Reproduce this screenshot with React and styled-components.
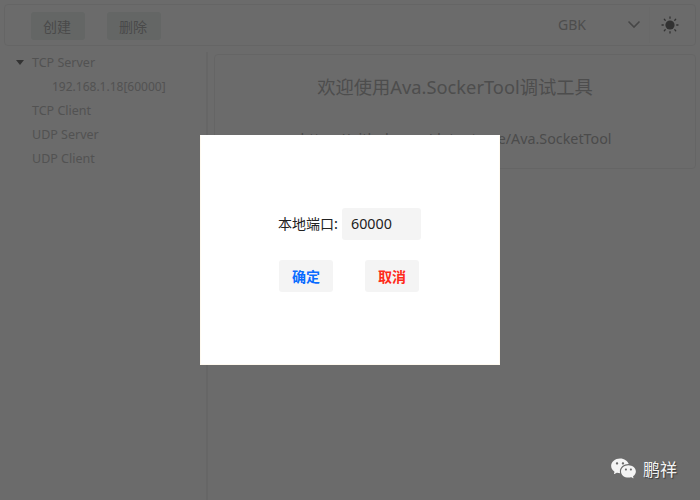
import React from "react";
import styled, { createGlobalStyle } from "styled-components";
import { RiWechatFill } from "react-icons/ri";

const Global = createGlobalStyle`
  html, body { margin: 0; padding: 0; background: #fff; }
  body { font-family: "Noto Sans", "Noto Sans CJK SC", sans-serif; }
  * { box-sizing: border-box; }
`;

const Page = styled.div`
  position: relative;
  width: 700px;
  height: 500px;
  overflow: hidden;
  display: flex;
  flex-direction: column;
  padding: 4px 4px 0 4px;
  background: #ffffff;
  color: #555;
`;

const Toolbar = styled.header`
  height: 42px;
  flex: none;
  display: flex;
  align-items: center;
  border: 1px solid #f0f0f0;
  border-radius: 4px;
  padding: 0 16px 0 26px;
`;

const ToolButton = styled.button`
  width: 54px;
  height: 28px;
  margin-right: 22px;
  margin-top: 2px;
  border: 0;
  border-radius: 3px;
  background: #eef3f0;
  color: #b0b0b0;
  font: 14px "Noto Sans CJK SC", sans-serif;
  padding: 0 2px 0 0;
`;

const Spacer = styled.div`
  flex: 1;
`;

const Encoding = styled.div`
  width: 92px;
  height: 36px;
  display: flex;
  align-items: center;
  justify-content: space-between;
  padding: 0 8px 2px 0;
  border-right: 1px solid #fafafa;
  font-size: 14px;
  color: #b8b8b8;
`;

const SunWrap = styled.div`
  width: 29px;
  display: flex;
  justify-content: flex-end;
`;

const Body = styled.div`
  flex: 1;
  display: flex;
  padding-top: 8px;
`;

const Sidebar = styled.nav`
  width: 204px;
  flex: none;
  border-right: 2px solid #f2f2f2;
  margin-right: 6px;
  margin-top: -2px;
`;

const TreeRow = styled.div`
  height: 24px;
  display: flex;
  align-items: center;
  padding-left: ${(p) => p.$indent}px;
  margin-top: ${(p) => (p.$first ? -2 : 0)}px;
  font-size: ${(p) => p.$size}px;
  color: #c4c4c4;
  white-space: nowrap;
`;

const Caret = styled.span`
  width: 0;
  height: 0;
  margin: 0 8px 0 -16px;
  border-left: 4px solid transparent;
  border-right: 4px solid transparent;
  border-top: 5px solid #7a7a7a;
`;

const WelcomeCard = styled.section`
  width: 482px;
  height: 115px;
  border: 1px solid #f0f0f0;
  border-radius: 4px;
  display: flex;
  flex-direction: column;
  align-items: center;
`;

const Title = styled.h1`
  margin: 19px 0 0;
  font-size: 18.3px;
  font-weight: 400;
  line-height: 26px;
  color: #b8b8b8;
`;

const Link = styled.div`
  margin-top: 29px;
  padding-left: 2px;
  font-size: 14.3px;
  line-height: 20px;
  color: #b4b4b4;
`;

const Scrim = styled.div`
  position: absolute;
  inset: 0;
  background: rgba(0, 0, 0, 0.58);
`;

const Dialog = styled.div`
  position: absolute;
  left: 200px;
  top: 135px;
  width: 300px;
  height: 230px;
  background: #fff;
  border: 1px solid #fffaf0;
  border-top-color: #fff;
  display: flex;
  flex-direction: column;
  align-items: center;
  padding-top: 72px;
`;

const Field = styled.div`
  display: flex;
  align-items: center;
  gap: 4px;
`;

const FieldLabel = styled.label`
  padding-bottom: 2px;
  margin-left: -1px;
  font: 14px "Noto Sans CJK SC", sans-serif;
  color: #222;
`;

const PortInput = styled.div`
  width: 79px;
  height: 32px;
  border-radius: 3px;
  background: #f4f4f4;
  padding-left: 9px;
  font-size: 14.3px;
  line-height: 32px;
  color: #222;
`;

const Actions = styled.div`
  display: flex;
  gap: ${(p) => p.$gap}px;
  margin-top: 20px;
  margin-left: -2px;
`;

const DialogButton = styled.button`
  width: 54px;
  height: 32px;
  border: 0;
  border-radius: 3px;
  background: #f4f4f4;
  color: ${(p) => p.$color};
  font: 700 14px "Noto Sans CJK SC", sans-serif;
  padding: 0;
`;

const Watermark = styled.div`
  position: absolute;
  left: 610px;
  top: 455px;
  display: flex;
  align-items: center;
  gap: 6px;
  color: #f4f4f4;
  font: 17px "Noto Sans CJK SC", sans-serif;
  text-shadow: 1px 1px 1px rgba(0, 0, 0, 0.5);
`;

const Sun = () => (
  <svg width="18" height="18" viewBox="0 0 18 18" fill="none" stroke="#777" strokeWidth="1.3" strokeLinecap="round">
    <circle cx="9" cy="9" r="4.6" fill="#777" stroke="none" />
    <path d="M9 1v1.3M9 15.7V17M1 9h1.3M15.7 9H17M3.3 3.3l.9.9M13.8 13.8l.9.9M3.3 14.7l.9-.9M13.8 4.2l.9-.9" />
  </svg>
);

const Chevron = () => (
  <svg width="14" height="9" viewBox="0 0 14 9" fill="none" stroke="#a8a8a8" strokeWidth="1.6">
    <path d="M1.5 1.5 7 7l5.5-5.5" />
  </svg>
);

export default function App() {
  return (
    <>
      <Global />
      <Page>
        <Toolbar>
          <ToolButton>创建</ToolButton>
          <ToolButton>删除</ToolButton>
          <Spacer />
          <Encoding>
            <span>GBK</span>
            <Chevron />
          </Encoding>
          <SunWrap>
            <Sun />
          </SunWrap>
        </Toolbar>
        <Body>
          <Sidebar>
            <TreeRow $first $indent={28} $size={12.5}>
              <Caret />
              TCP Server
            </TreeRow>
            <TreeRow $indent={48} $size={12}>192.168.1.18[60000]</TreeRow>
            <TreeRow $indent={28} $size={12.5}>TCP Client</TreeRow>
            <TreeRow $indent={28} $size={12.5}>UDP Server</TreeRow>
            <TreeRow $indent={28} $size={12.5}>UDP Client</TreeRow>
          </Sidebar>
          <WelcomeCard>
            <Title>欢迎使用Ava.SockerTool调试工具</Title>
            <Link>https://github.com/dotnetcore/Ava.SocketTool</Link>
          </WelcomeCard>
        </Body>
        <Scrim />
        <Dialog>
          <Field>
            <FieldLabel>本地端口:</FieldLabel>
            <PortInput>60000</PortInput>
          </Field>
          <Actions $gap={32}>
            <DialogButton $color="#0a6cff">确定</DialogButton>
            <DialogButton $color="#ff2a1a">取消</DialogButton>
          </Actions>
        </Dialog>
        <Watermark>
          <RiWechatFill size={27} />
          鹏祥
        </Watermark>
      </Page>
    </>
  );
}
